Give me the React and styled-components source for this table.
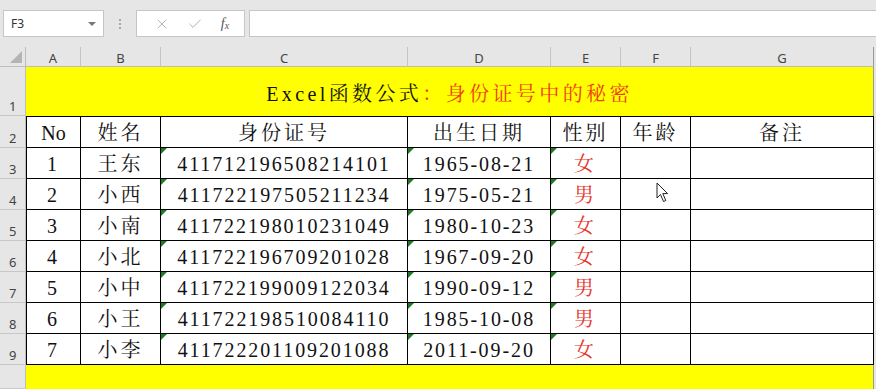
import React from 'react';
import styled, { createGlobalStyle } from 'styled-components';
import { X, Check } from 'lucide-react';

const GlobalStyle = createGlobalStyle`
  html, body {
    margin: 0;
    padding: 0;
    background: #e6e6e6;
    overflow: hidden;
  }
  * { box-sizing: border-box; }
`;

const COLS = '26px 55px 80px 247px 143px 70px 70px 183px 1fr';
const SERIF = `"Liberation Serif", "Noto Serif CJK SC", "Noto Sans CJK SC", serif`;

const Page = styled.div`
  width: 876px;
  height: 389px;
  display: flex;
  flex-direction: column;
  background: #e6e6e6;
  font-family: "Noto Sans", "Liberation Sans", sans-serif;
`;

const Toolbar = styled.div`
  height: 47px;
  flex-shrink: 0;
  display: flex;
  align-items: flex-start;
  padding: 10px 0 0 3px;
`;

const NameBox = styled.div`
  width: 101px;
  height: 27px;
  background: #fff;
  border: 1px solid #c6c6c6;
  display: flex;
  align-items: center;
  justify-content: space-between;
  padding: 0 7px;
  font-size: 12px;
  color: #333;
`;

const DropArrow = styled.span`
  width: 0;
  height: 0;
  border-left: 4px solid transparent;
  border-right: 4px solid transparent;
  border-top: 4px solid #777;
`;

const Dots = styled.div`
  width: 32px;
  height: 27px;
  display: flex;
  flex-direction: column;
  align-items: center;
  justify-content: center;
  gap: 2px;
  span {
    width: 2px;
    height: 2px;
    background: #a8a8a8;
  }
`;

const FuncBox = styled.div`
  width: 109px;
  height: 27px;
  background: #fff;
  border: 1px solid #c6c6c6;
  display: flex;
  align-items: center;
  justify-content: space-around;
  padding: 0 6px 0 8px;
  color: #b4b4b4;
`;

const Fx = styled.span`
  font-family: ${SERIF};
  font-style: italic;
  font-size: 14px;
  color: #555;
  sub {
    font-size: 10px;
    vertical-align: -1px;
  }
`;

const Formula = styled.div`
  flex: 1;
  height: 27px;
  margin-left: 4px;
  background: #fff;
  border: 1px solid #c6c6c6;
  border-right: none;
`;

const Row = styled.div`
  display: grid;
  grid-template-columns: ${COLS};
  grid-template-rows: ${({ $h }) => $h}px;
  height: ${({ $h }) => $h}px;
  flex-shrink: 0;
`;

const Corner = styled.div`
  position: relative;
  border-right: 1px solid #bdbdbd;
  border-bottom: 1px solid #bdbdbd;
  &::after {
    content: '';
    position: absolute;
    right: 3px;
    bottom: 3px;
    width: 0;
    height: 0;
    border-left: 12px solid transparent;
    border-bottom: 12px solid #b4b4b4;
  }
`;

const ColHead = styled.div`
  display: flex;
  align-items: center;
  justify-content: center;
  font-size: 13px;
  line-height: 16px;
  color: #444;
  border-right: 1px solid ${({ $last }) => ($last ? '#9a9a9a' : '#c4c4c4')};
  border-bottom: 1px solid #bdbdbd;
  padding-top: 2px;
`;

const RowHead = styled.div`
  display: flex;
  align-items: flex-end;
  padding: 0 0 1px 9px;
  font-size: 13px;
  line-height: 16px;
  color: #444;
  border-right: 1px solid #bdbdbd;
  border-bottom: 1px solid #c8c8c8;
`;

const Title = styled.div`
  grid-column: 2 / 9;
  background: #ffff00;
  border-right: 1px solid #9a9a9a;
  display: flex;
  align-items: center;
  justify-content: center;
  padding-top: 4px;
  font-family: ${SERIF};
  font-size: 20px;
  line-height: 24px;
  letter-spacing: 3.4px;
  color: #111;
  span { color: #f03a12; }
`;

const Band = styled.div`
  grid-column: 2 / 9;
  background: #ffff00;
  border-right: 1px solid #9a9a9a;
`;

const Cell = styled.div`
  position: relative;
  min-height: 0;
  overflow: hidden;
  display: flex;
  align-items: center;
  justify-content: center;
  padding-top: 2px;
  background: #fff;
  border-right: 1px solid #000;
  border-bottom: 1px solid #000;
  border-top: ${({ $top }) => ($top ? '1px solid #000' : 'none')};
  border-left: ${({ $first }) => ($first ? '1px solid #000' : 'none')};
  font-family: ${SERIF};
  font-size: ${({ $size }) => $size || 20}px;
  line-height: 22px;
  letter-spacing: ${({ $ls }) => ($ls === undefined ? 3 : $ls)}px;
  color: ${({ $color }) => $color || '#111'};
  white-space: nowrap;
  &::before {
    content: '';
    display: ${({ $mark }) => ($mark ? 'block' : 'none')};
    position: absolute;
    left: 0;
    top: 0;
    width: 0;
    height: 0;
    border-top: 6px solid #1f7a24;
    border-right: 6px solid transparent;
  }
`;

const Cursor = styled.svg`
  position: absolute;
  left: 35px;
  top: 3px;
`;

const people = [
  ['1', '王东', '411712196508214101', '1965-08-21', '女'],
  ['2', '小西', '411722197505211234', '1975-05-21', '男'],
  ['3', '小南', '411722198010231049', '1980-10-23', '女'],
  ['4', '小北', '411722196709201028', '1967-09-20', '女'],
  ['5', '小中', '411722199009122034', '1990-09-12', '男'],
  ['6', '小王', '411722198510084110', '1985-10-08', '男'],
  ['7', '小李', '411722201109201088', '2011-09-20', '女'],
];

const letters = ['A', 'B', 'C', 'D', 'E', 'F', 'G'];

export default function App() {
  return (
    <Page>
      <GlobalStyle />
      <Toolbar>
        <NameBox>
          F3
          <DropArrow />
        </NameBox>
        <Dots>
          <span />
          <span />
          <span />
        </Dots>
        <FuncBox>
          <X size={16} strokeWidth={1.5} />
          <Check size={16} strokeWidth={1.5} />
          <Fx>
            f<sub>x</sub>
          </Fx>
        </FuncBox>
        <Formula />
      </Toolbar>

      <Row $h={20}>
        <Corner />
        {letters.map((l, i) => (
          <ColHead key={l} $last={i === letters.length - 1}>
            {l}
          </ColHead>
        ))}
      </Row>

      <Row $h={49}>
        <RowHead>1</RowHead>
        <Title>
          Excel函数公式<span>：身份证号中的秘密</span>
        </Title>
      </Row>

      <Row $h={32}>
        <RowHead>2</RowHead>
        <Cell $top $first $ls={0}>No</Cell>
        <Cell $top>姓名</Cell>
        <Cell $top>身份证号</Cell>
        <Cell $top>出生日期</Cell>
        <Cell $top>性别</Cell>
        <Cell $top>年龄</Cell>
        <Cell $top>备注</Cell>
      </Row>

      {people.map((p, i) => (
        <Row $h={31} key={p[0]}>
          <RowHead>{i + 3}</RowHead>
          <Cell $first>{p[0]}</Cell>
          <Cell>{p[1]}</Cell>
          <Cell $mark $ls={1.9}>{p[2]}</Cell>
          <Cell $mark $ls={1.9}>{p[3]}</Cell>
          <Cell $mark $color="#e8322a">{p[4]}</Cell>
          <Cell>
            {i === 1 && (
              <Cursor width="14" height="21" viewBox="0 0 14 21">
                <path
                  d="M1 1 L1 16 L4.5 12.5 L7.5 19.5 L9.8 18.5 L6.8 11.6 L11.6 11.6 Z"
                  fill="#fff"
                  stroke="#222"
                  strokeWidth="1"
                  strokeLinejoin="round"
                />
              </Cursor>
            )}
          </Cell>
          <Cell />
        </Row>
      ))}

      <Row $h={24}>
        <RowHead />
        <Band />
      </Row>
    </Page>
  );
}
